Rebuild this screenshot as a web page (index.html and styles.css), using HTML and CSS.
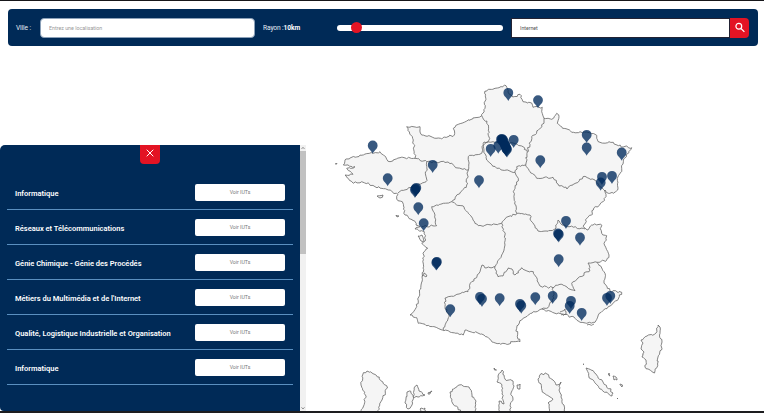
FILE: index.html
```html
<!DOCTYPE html>
<html lang="fr">
<head>
<meta charset="utf-8">
<title>Carte des IUT</title>
<link rel="stylesheet" href="styles.css">
</head>
<body>
<header class="search">
  <label class="city-label">Ville :</label>
  <input class="city" type="text" placeholder="Entrez une localisation">
  <span class="radius-label">Rayon :<b>10km</b></span>
  <div class="slider"><span class="thumb"></span></div>
  <div class="keyword">
    <input class="term" type="text" value="Internet">
    <button class="go" aria-label="Rechercher"><svg viewBox="0 0 12 12"><circle cx="4.8" cy="4.3" r="2.9"/><path d="M7 6.5L10.4 9.9"/></svg></button>
  </div>
</header>
<main class="content">
  <aside class="panel">
    <div class="list">
      <button class="close" aria-label="Fermer"><svg viewBox="0 0 10 10"><path d="M1.7 1.7l6.6 6.6M8.3 1.7L1.7 8.3"/></svg></button>
      <div class="row"><span class="name">Informatique</span><button class="see">Voir IUTs</button></div>
      <div class="row"><span class="name">Réseaux et Télécommunications</span><button class="see">Voir IUTs</button></div>
      <div class="row"><span class="name">Génie Chimique - Génie des Procédés</span><button class="see">Voir IUTs</button></div>
      <div class="row"><span class="name">Métiers du Multimédia et de l'Internet</span><button class="see">Voir IUTs</button></div>
      <div class="row"><span class="name">Qualité, Logistique Industrielle et Organisation</span><button class="see">Voir IUTs</button></div>
      <div class="row"><span class="name">Informatique</span><button class="see">Voir IUTs</button></div>
    </div>
    <div class="scroll">
      <svg viewBox="0 0 6 6"><path d="M1.5 4L3 2.3 4.5 4"/></svg>
      <span class="bar"></span>
      <svg class="down" viewBox="0 0 6 6"><path d="M1.5 2.3L3 4 4.5 2.3"/></svg>
    </div>
  </aside>
  <svg class="map" viewBox="306 46 458 365">
    <g id="land"></g>
    <g id="pins"></g>
  </svg>
</main>
<script src="map.js"></script>
</body>
</html>
```
FILE: styles.css
```css
* { box-sizing: border-box; }
body {
  margin: 0;
  height: 413px;
  overflow: hidden;
  display: flex;
  flex-direction: column;
  background: #fff;
  border-top: 1px solid #16161a;
  border-bottom: 2px solid #1d1d1f;
  font-family: Roboto, "Liberation Sans", sans-serif;
}
button, input { font-family: inherit; border: 0; padding: 0; margin: 0; outline: 0; }
.search {
  flex: none;
  display: flex;
  align-items: center;
  height: 37px;
  margin: 8px 6px 0 8px;
  padding: 0 8px;
  border-radius: 4px;
  background: #002a57;
  color: #e6edf5;
  font-size: 6.6px;
}
.city-label { width: 24px; letter-spacing: -.1px; }
.city { width: 215px; height: 20px; padding-left: 8px; border: 1px solid #8ba0b8; border-radius: 4px; font-size: 5.3px; background: #fff; }
.city::placeholder { color: #999; opacity: 1; }
.radius-label { width: 74px; margin-left: 8px; letter-spacing: -.1px; }
.radius-label b { color: #fff; }
.slider { width: 166px; height: 6px; border-radius: 3px; background: #fff; display: flex; align-items: center; padding-left: 14px; }
.thumb { width: 11px; height: 11px; border-radius: 50%; background: #e31424; }
.keyword { display: flex; align-items: center; margin-left: 8px; }
.term { width: 219px; height: 20px; padding-left: 8px; border: 1px solid #223; font-size: 5.2px; color: #555; background: #fff; }
.go { width: 19px; height: 20px; background: #e31424; border-radius: 0 4px 4px 0; display: flex; align-items: center; justify-content: center; }
.go svg { width: 12px; height: 12px; fill: none; stroke: #fff; stroke-width: 1.2; }
.content { flex: 1; min-height: 0; display: flex; }
.panel { width: 306px; margin-top: 99px; display: flex; }
.list { width: 300px; padding: 0 7px; background: #002a57; border-radius: 5px 0 0 4px; }
.close { display: flex; align-items: center; justify-content: center; width: 20px; height: 19px; margin: 0 auto 11px 133px; padding-bottom: 4px; background: #e31424; border-radius: 0 0 4px 4px; }
.close svg { width: 10px; height: 10px; fill: none; stroke: #fff; stroke-width: 1; }
.row { display: flex; align-items: center; justify-content: space-between; height: 35px; padding: 0 8px; border-bottom: 1px solid #5a8fc0; }
.name { padding-top: 2px; color: #fff; font-size: 7.5px; font-weight: 600; white-space: nowrap; }
.see { width: 90px; height: 17px; border-radius: 2px; background: #fff; color: #777; font-size: 5.2px; }
.scroll { width: 6px; display: flex; flex-direction: column; background: #f1f1f1; }
.scroll svg { width: 6px; height: 6px; fill: none; stroke: #777; stroke-width: .8; }
.bar { height: 103px; background: #c1c1c1; }
.down { margin-top: auto; }
.map { width: 458px; height: 365px; display: block; }
.land { fill: #f5f5f5; stroke: #666; stroke-width: .8; stroke-linejoin: round; }
.border { fill: none; stroke: #666; stroke-width: .8; stroke-linejoin: round; }
.pin { fill: #002a5c; fill-opacity: .78; }
```
FILE: map.js
```js
const shapes = [
  // mainland
  [1, "485,91 495,88.3 506,85.7 508,92 512.7,97 520,94.3 523,101.7 531.7,103 533,107.3 542.3,107.3 541.7,111.7 544,118.3 551.7,119.3 556.7,113.3 559,116.7 557.3,123.3 561.7,126.7 571.7,132.3 580,131.7 595,134.3 600,142.3 613.3,142.3 618.3,145.7 631.7,147.7 623.3,160 621.7,168.3 617.3,178.3 617.7,190 613.3,193.3 608.3,193.3 605,190 606,196.7 601.7,202.3 593.3,210 591.7,215 586.7,218.3 583.3,226.7 588,230 591.7,225 600.7,224.3 601.7,233.3 606.7,235.7 604,243.3 609,255 606.7,260 596.7,262.3 605,273.3 604,283.3 610,291 621.7,292.3 618.3,299 608.3,306.7 598.3,315 595,322.3 586.7,323.3 580,322.3 575,318.3 568.3,315.7 555,313.3 541.7,309 533.3,311.7 521.7,320 516.7,328.3 517.3,336.7 520,341.7 513.3,341.7 506.7,344.3 493.3,342.3 481.7,334 465,330 463.3,335 442.3,330 425,324.3 418.3,323.3 416.7,317.7 410,315 416.7,306.7 421,285 423,268 424,251.7 427.7,248.3 421.7,243.3 425,241 424.3,231.7 415,229 420,226.7 405,215 402.3,201.7 396.7,199 398,194.3 388.3,190 375,186.7 361.7,181.7 353.3,183.3 345,175 353,174.3 346.7,168.3 355,166.7 343.3,165 345,160 360,155 373.3,153.3 380,151.7 390,161.7 400,157.7 415,158.3 413.3,140 406.7,126.7 420,126.7 421.7,135 441.7,139 454.3,135 453.3,128.3 458.3,124.3 481.7,115.7 485,108.3"],
  // regional borders
  [0, "481.7,115.7 488.3,125 489,140 482,146.7 481.7,153.3 468.3,156.7 468.3,170 458,168 448,162 440,162 426.7,161.7 415,158.3"],
  [0, "426.7,162 426,181.7 415,185 398,193"],
  [0, "468.3,170 466.7,185 451.7,201.7 431.7,206.7 435,215 436.7,225.7 421.7,226.7"],
  [0, "451.7,201.7 456.7,205 464,207 468.3,213.3 478.3,225.7 495,224.3 501.7,223.3 505,235 505,245 501.7,255 495,266.7 486,268 482,265 480,271.7 471.7,281.7 468,291.7 445,298 445,306.7 449,315 443.3,330"],
  [0, "495,266.7 498,276.7 503,276 508,268 512,269 515,275 521.7,267.7 527,271 533.3,271.7 540,286 553,287.7 554,298.3 548,307.7 541.7,309"],
  [0, "553,287.7 560,284.3 567,287 575,290.7 571.7,283.3 590,270 588,263 596.7,262.3"],
  [0, "501.7,223.3 505,219 516.7,213.3 530,215 532,222 538,231 546,231 555,229 558,220 562,225 570,226.7 585,229"],
  [0, "516.7,213.3 513.3,191.7 518.3,178.3 515,172.3 496.7,168.3 486.7,160 484,150 484,142 493,141.7 513,143 523,146.7 527.3,152.3 525.7,165 516.7,166.7 515,172.3"],
  [0, "544,118.3 542,126.7 531.7,136.7 527.3,152.3"],
  [0, "525.7,165 530,171.7 536.7,178.3 553,177.3 558,184 567,189 576,183 583,176.7 595,180 605,191"],
  // coastal islets
  [1, "418,236 422,235 424,241 421,241"],
  [1, "422,276 424,273 427,276"],
  [1, "335.5,163.5 337,163.5 336,164.5"],
  [1, "377,196 383,195 380,198"],
  [1, "396,215 399,216 397,217"],
  [0, "560,312 565,309 566,314 561,315"],
  [0, "587,325 594,324"],
  // Corsica
  [1, "658,325 660,327 659.5,335 662,342 661.5,350 658,357 657.5,364 654.5,373 650,370 645,367 646,360 642,357 644,352 641,349 643,343 641,340 647,336 656,333"],
  // overseas
  [1, "367,371 376,375 387.5,388 382,400 377,413 361,413 366,396 361,385 363,374"],
  [1, "407,392 411,391.5 413.5,397 412,405 408,409 405,403"],
  [1, "414,388 417,385 419,391 425,395 418,397 413,397"],
  [1, "421,408 425,408 426,413 420,413"],
  [1, "428,394 432,391 430,394"],
  [1, "450,392 459,385 469,387 472,395 476,401 475,413 463,413 453,404"],
  [1, "494,368 496.5,370 494.5,370"],
  [1, "498,376 502,370 505,379 513,381 514,386 511,393 513,399 510,406 511,413 500,413 499,401 504,404 502,394 502,385 497,382"],
  [1, "517,385 520,384 520,389 518,389"],
  [1, "538,379 541,373.5 547,374 553,380 556,385 561,382 559,390 561,397 564,405 564,413 549,412 548,403 553,399 544,393"],
  [1, "586,368 591,370 603,382 613,393 612,396 600,389 591,379"],
  [1, "583,364 584,364.5"],
  [1, "609,373 610,376 608.5,375"],
  [1, "613,376 616,377 617,380 614,380"],
  [1, "620,384 622.5,385 622,387"],
  [1, "617,398 618,399"]
];

const pins = [
  [372.7,145.7],[387.7,178.3],[432.7,165],[415,190],[416.3,188],[415.5,189],[418.3,207.3],[479,180.3],[490.7,149],
  [508.3,93],[538,100.3],[586.7,135],[586.7,147.7],[621.7,152.7],[612,176],[602,177],[600.7,182.7],[540.3,160.3],
  [513.7,140],[498.3,145.7],[501,139.5],[502,139],[503,140],[502,140],[505,145],[504,142],[506.5,149],[506,148],[507,149.5],[505.5,146],
  [423.7,223.3],[436.3,262.6],[436.9,262],[450.3,309.3],[480,297],[482,299],
  [566,221],[558,233.6],[558.8,234.5],[580,237.7],[558.7,259.3],[499.7,298.3],[520,304],[521.3,305.7],[535.3,297.3],
  [552.7,296],[571,301],[569.7,306],[581.7,313],[607,298],[610.3,296]
];

let seed = 7;
function random() {
  seed = (seed * 16807) % 2147483647;
  return seed / 2147483647 - 0.5;
}

// Subdivides each segment and nudges the new points to give a natural coastline.
function roughen(points, closed) {
  const out = [];
  const count = closed ? points.length : points.length - 1;
  for (let i = 0; i < count; i++) {
    const [ax, ay] = points[i];
    const [bx, by] = points[(i + 1) % points.length];
    const steps = Math.max(1, Math.round(Math.hypot(bx - ax, by - ay) / 2));
    out.push([ax, ay]);
    for (let s = 1; s < steps; s++) {
      const t = s / steps;
      out.push([ax + (bx - ax) * t + random() * 2, ay + (by - ay) * t + random() * 2]);
    }
  }
  if (!closed) out.push(points[points.length - 1]);
  return out;
}

function addPath(parent, cls, d) {
  const path = document.createElementNS("http://www.w3.org/2000/svg", "path");
  path.setAttribute("class", cls);
  path.setAttribute("d", d);
  parent.appendChild(path);
}

const land = document.getElementById("land");
for (const [closed, text] of shapes) {
  const points = text.split(" ").map(p => p.split(",").map(Number));
  const line = roughen(points, closed).map(p => p[0].toFixed(1) + " " + p[1].toFixed(1)).join("L");
  addPath(land, closed ? "land" : "border", "M" + line + (closed ? "Z" : ""));
}

const layer = document.getElementById("pins");
for (const [x, y] of pins) {
  addPath(layer, "pin", `M${x} ${y + 8}C${x - 1} ${y + 5} ${x - 4.9} ${y + 3.5} ${x - 4.9} ${y - 0.2}A4.9 4.9 0 0 1 ${x + 4.9} ${y - 0.2}C${x + 4.9} ${y + 3.5} ${x + 1} ${y + 5} ${x} ${y + 8}Z`);
}
```
